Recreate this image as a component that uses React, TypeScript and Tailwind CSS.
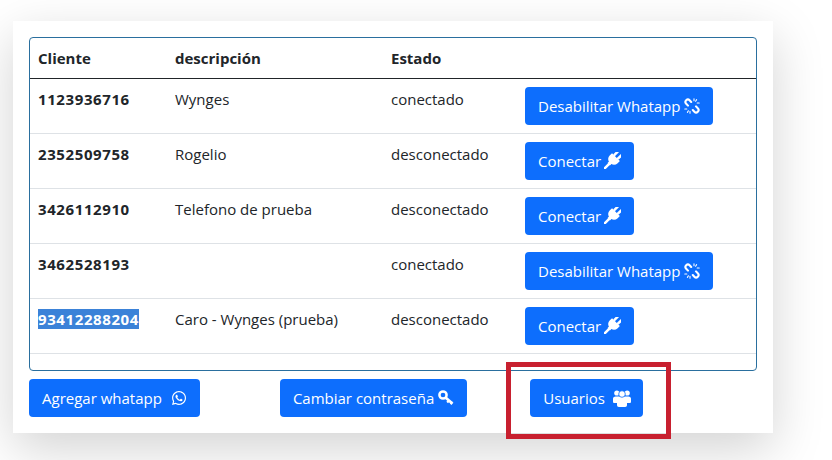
import { FaWhatsapp } from "react-icons/fa";
import type { ReactNode } from "react";

type Row = {
  cliente: string;
  descripcion: string;
  conectado: boolean;
  selected?: boolean;
};

const rows: Row[] = [
  { cliente: "1123936716", descripcion: "Wynges", conectado: true },
  { cliente: "2352509758", descripcion: "Rogelio", conectado: false },
  { cliente: "3426112910", descripcion: "Telefono de prueba", conectado: false },
  { cliente: "3462528193", descripcion: "", conectado: true },
  { cliente: "93412288204", descripcion: "Caro - Wynges (prueba)", conectado: false, selected: true },
];

const PlugIcon = () => (
  <svg viewBox="0 0 16 16" className="ml-[3px] size-[17px]" fill="currentColor">
    <g transform="rotate(45 8 8)">
      <rect x="4.4" y="-2.4" width="2.4" height="6.4" rx="1.1" />
      <rect x="9.2" y="-2.4" width="2.4" height="6.4" rx="1.1" />
      <path d="M2.8 3.4h10.4v2.9a5.2 5.2 0 0 1-3.6 4.9V13H6.4v-1.8a5.2 5.2 0 0 1-3.6-4.9z" />
      <rect x="6.8" y="11" width="2.4" height="8.5" rx="1.1" />
    </g>
  </svg>
);

const UnlinkIcon = () => (
  <svg viewBox="0 0 16 16" className="ml-[4px] size-4" fill="none" stroke="currentColor" strokeLinecap="round">
    <path strokeWidth="2.1" d="M7.2 4 5.6 2.3a2.4 2.4 0 0 0-3.4 3.4L4 7.6" />
    <path strokeWidth="2.1" d="M8.8 12l1.6 1.7a2.4 2.4 0 0 0 3.4-3.4L12 8.4" />
    <path strokeWidth="1.1" d="M10 .8v2M12.6 1.6l-1 1.6M15.2 5h-2M2.8 11h-2M3.4 14.4l1-1.6M6 15.2v-2" />
  </svg>
);

const KeyIcon = () => (
  <svg viewBox="0 0 16 16" className="ml-[4px] size-4" fill="none" stroke="currentColor">
    <circle cx="5" cy="5" r="3.6" strokeWidth="2.5" />
    <path strokeWidth="2.8" d="M7.5 7.5 13.8 13" />
    <path strokeWidth="2.2" d="M11 10.4 9.2 12.4M14.6 12l-2 2.2" />
  </svg>
);

const UsersIcon = () => (
  <svg viewBox="0 0 18 17" className="-mr-px ml-2 h-[17px] w-[18px]" fill="currentColor">
    <circle cx="3.8" cy="3" r="2.6" />
    <circle cx="14.2" cy="3" r="2.6" />
    <path d="M0 8.4c.4-1.1 1.3-1.8 2.6-1.8h12.8c1.3 0 2.2.7 2.6 1.8v3c0 1-.5 1.6-1.4 1.6H14v2c0 1.2-.7 2-1.9 2H5.9C4.7 17 4 16.2 4 15v-2H1.4C.5 13 0 12.4 0 11.4z" />
    <circle cx="9" cy="4" r="3.3" stroke="#0d6efd" strokeWidth="0.8" />
  </svg>
);

const Button = ({ children, className = "" }: { children: ReactNode; className?: string }) => (
  <button
    type="button"
    className={`flex h-[38px] items-center rounded-[4px] bg-[#0d6efd] px-[13px] text-[15px] text-white ${className}`}
  >
    {children}
  </button>
);

export default function App() {
  return (
    <div className="relative h-[460px] w-[832px] overflow-hidden bg-white pl-[13px] pt-[21px] font-['Open_Sans',sans-serif] text-[15px] leading-6 text-[#212529]">
      <div className="w-[760px] bg-white p-4 shadow-[0_16px_48px_rgba(0,0,0,0.175)]">
        <div className="h-[334px] rounded-[4px] border border-[#2a6f9e]">
          <table className="w-full table-fixed border-collapse text-left">
            <thead>
              <tr className="h-[40px] border-b border-[#212529]">
                <th className="w-[137px] px-2 font-bold">Cliente</th>
                <th className="w-[216px] px-2 font-bold">descripción</th>
                <th className="w-[134px] px-2 font-bold">Estado</th>
                <th />
              </tr>
            </thead>
            <tbody>
              {rows.map((row) => (
                <tr key={row.cliente} className="h-[55px] border-b border-[#dee2e6] align-top">
                  <td className="p-2 text-[15px] font-bold tracking-[0.6px]">
                    {row.selected ? <span className="bg-[#3b82d8] text-white">{row.cliente}</span> : row.cliente}
                  </td>
                  <td className="p-2">{row.descripcion}</td>
                  <td className="p-2">{row.conectado ? "conectado" : "desconectado"}</td>
                  <td className="p-2">
                    {row.conectado ? (
                      <Button>
                        Desabilitar Whatapp
                        <UnlinkIcon />
                      </Button>
                    ) : (
                      <Button>
                        Conectar
                        <PlugIcon />
                      </Button>
                    )}
                  </td>
                </tr>
              ))}
            </tbody>
          </table>
        </div>
        <div className="mt-2 flex">
          <Button>
            Agregar whatapp
            <FaWhatsapp className="ml-[9px] size-4" />
          </Button>
          <Button className="ml-[80px]">
            Cambiar contraseña
            <KeyIcon />
          </Button>
          <Button className="ml-[63px]">
            Usuarios
            <UsersIcon />
          </Button>
        </div>
      </div>
      <div className="absolute left-[506px] top-[362px] h-[77px] w-[165px] border-[5px] border-[#c8202f]" />
    </div>
  );
}
